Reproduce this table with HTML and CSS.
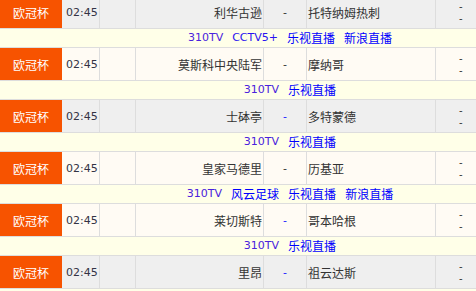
FILE: index.html
```html
<!DOCTYPE html>
<html lang="zh-CN">
<head>
<meta charset="utf-8">
<title>赛程</title>
<link rel="stylesheet" href="styles.css">
</head>
<body>
<div class="board">
  <div class="match grey">
    <div class="league">欧冠杯</div>
    <div class="time">02:45</div>
    <div class="blank"></div>
    <div class="home">利华古逊</div>
    <div class="vs">-</div>
    <div class="away">托特纳姆热刺</div>
    <div class="odds"><span>-</span><span>-</span></div>
  </div>
  <div class="channels">
    <a class="latin tv">310TV</a><a class="latin">CCTV5+</a><a>乐视直播</a><a>新浪直播</a>
  </div>

  <div class="match cream">
    <div class="league">欧冠杯</div>
    <div class="time">02:45</div>
    <div class="blank"></div>
    <div class="home">莫斯科中央陆军</div>
    <div class="vs">-</div>
    <div class="away">摩纳哥</div>
    <div class="odds"><span>-</span><span>-</span></div>
  </div>
  <div class="channels">
    <a class="latin tv">310TV</a><a>乐视直播</a>
  </div>

  <div class="match grey">
    <div class="league">欧冠杯</div>
    <div class="time">02:45</div>
    <div class="blank"></div>
    <div class="home">士砵亭</div>
    <div class="vs blue">-</div>
    <div class="away">多特蒙德</div>
    <div class="odds"><span>-</span><span>-</span></div>
  </div>
  <div class="channels">
    <a class="latin tv">310TV</a><a>乐视直播</a>
  </div>

  <div class="match cream">
    <div class="league">欧冠杯</div>
    <div class="time">02:45</div>
    <div class="blank"></div>
    <div class="home">皇家马德里</div>
    <div class="vs">-</div>
    <div class="away">历基亚</div>
    <div class="odds"><span>-</span><span>-</span></div>
  </div>
  <div class="channels">
    <a class="latin tv">310TV</a><a>风云足球</a><a>乐视直播</a><a>新浪直播</a>
  </div>

  <div class="match cream">
    <div class="league">欧冠杯</div>
    <div class="time">02:45</div>
    <div class="blank"></div>
    <div class="home">莱切斯特</div>
    <div class="vs blue">-</div>
    <div class="away">哥本哈根</div>
    <div class="odds"><span>-</span><span>-</span></div>
  </div>
  <div class="channels">
    <a class="latin tv">310TV</a><a>乐视直播</a>
  </div>

  <div class="match grey">
    <div class="league">欧冠杯</div>
    <div class="time">02:45</div>
    <div class="blank"></div>
    <div class="home">里昂</div>
    <div class="vs blue">-</div>
    <div class="away">祖云达斯</div>
    <div class="odds"><span>-</span><span>-</span></div>
  </div>
  <div class="channels"></div>
</div>
</body>
</html>
```

FILE: styles.css
```css
html, body {
  margin: 0;
  padding: 0;
  overflow: hidden;
  background: #ffffff;
}

.board {
  width: 580px;
  margin-top: -4px;
  font-family: "Noto Sans CJK SC", "DejaVu Sans", sans-serif;
  font-size: 12px;
  color: #333333;
}

.match {
  display: grid;
  grid-template-columns: 62px 38px 36px 128px 43px 129px 1fr;
  height: 33px;
  box-sizing: border-box;
  border-bottom: 1px solid #dddddd;
}

.match.grey { background: #efefef; }
.match.cream { background: #fffbf4; }

.match > div {
  box-sizing: border-box;
  border-right: 1px solid #dddddd;
  display: flex;
  align-items: center;
  padding-top: 2px;
  line-height: 14px;
  white-space: nowrap;
}

.match > .league {
  background: #f75300;
  color: #ffffff;
  justify-content: center;
  border-right: none;
}

.match > .time {
  font-family: "DejaVu Sans", sans-serif;
  font-size: 11px;
  padding-left: 4px;
  color: #333344;
}

.match > .home {
  justify-content: flex-end;
  padding-right: 1px;
}

.match > .vs {
  justify-content: center;
  font-family: "DejaVu Sans", sans-serif;
  font-size: 11px;
  color: #333333;
}

.match > .vs.blue { color: #1a1aff; }

.match > .away {
  padding-left: 1px;
}

.match > .odds {
  flex-direction: column;
  align-items: flex-start;
  justify-content: center;
  padding-left: 23px;
  padding-top: 1px;
  font-family: "DejaVu Sans", sans-serif;
  font-size: 10px;
  line-height: 12px;
  border-right: none;
}

.channels {
  height: 19px;
  box-sizing: border-box;
  border-bottom: 1px solid #dddddd;
  background: #ffffe8;
  display: flex;
  justify-content: center;
  align-items: center;
  gap: 9px;
  line-height: 18px;
}

.channels a {
  color: #0000ff;
  text-decoration: none;
}

.channels a.latin {
  font-family: "DejaVu Sans", sans-serif;
  font-size: 11px;
  color: #2a14f0;
}

.channels a.tv {
  color: #4a22dd;
}
```
